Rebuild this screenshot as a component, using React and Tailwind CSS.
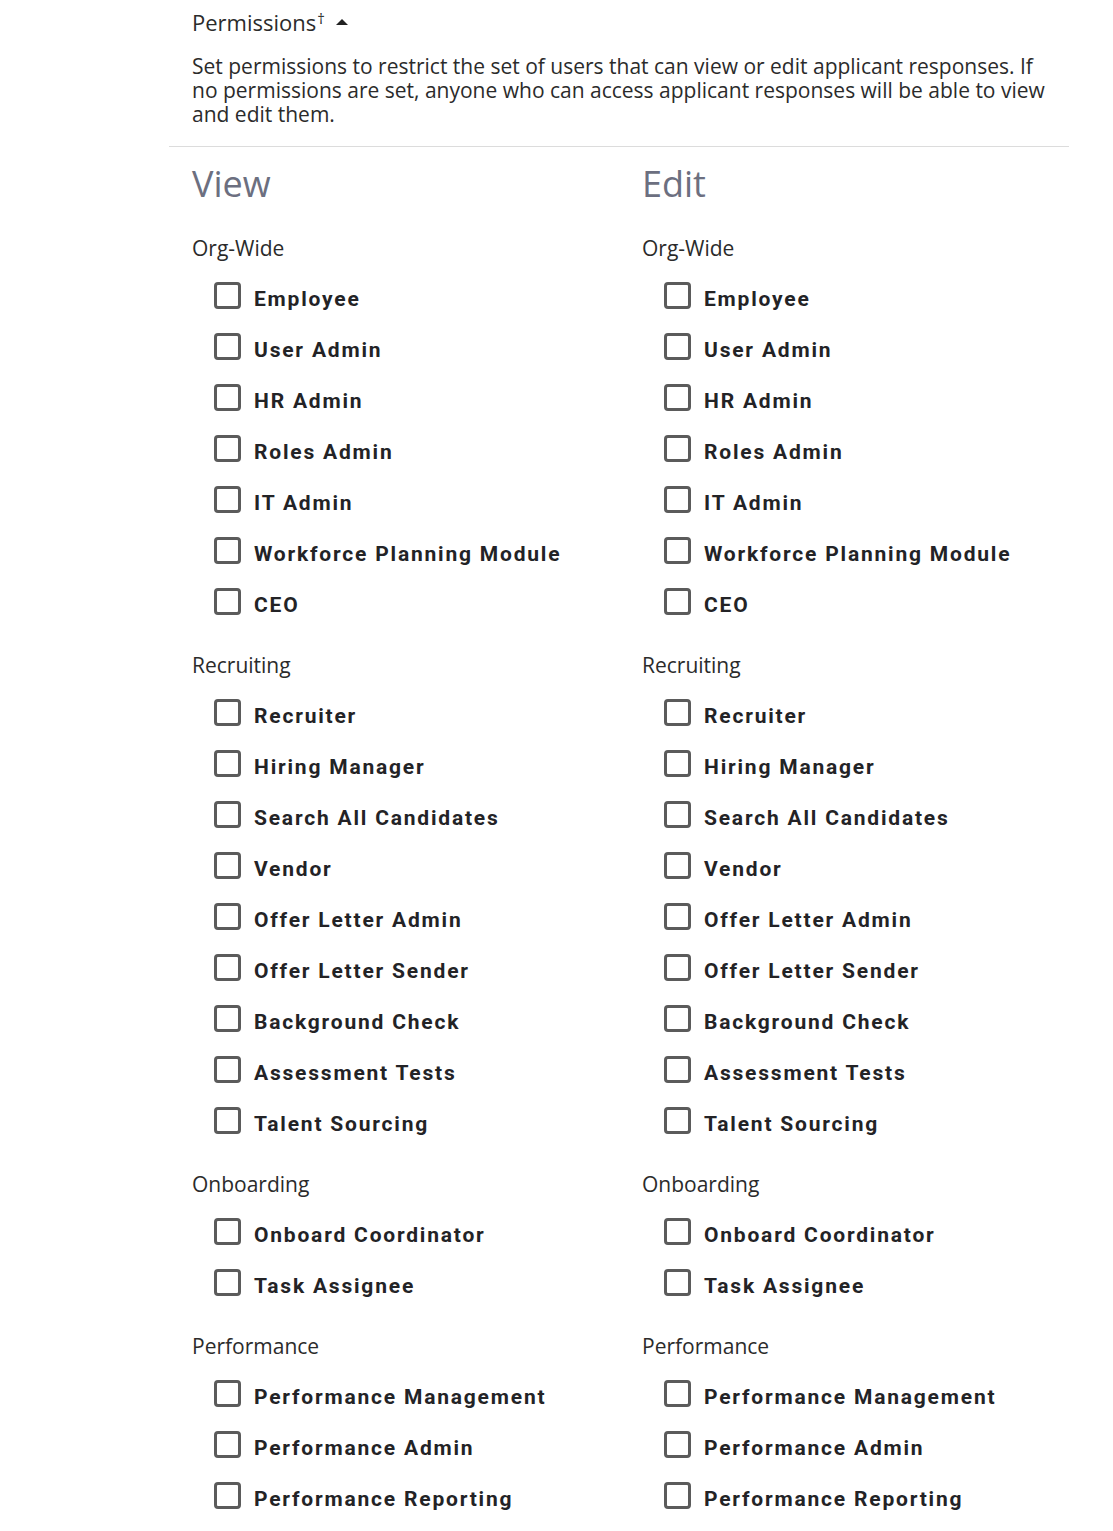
const groups = [
  {
    name: 'Org-Wide',
    roles: ['Employee', 'User Admin', 'HR Admin', 'Roles Admin', 'IT Admin', 'Workforce Planning Module', 'CEO'],
  },
  {
    name: 'Recruiting',
    roles: [
      'Recruiter',
      'Hiring Manager',
      'Search All Candidates',
      'Vendor',
      'Offer Letter Admin',
      'Offer Letter Sender',
      'Background Check',
      'Assessment Tests',
      'Talent Sourcing',
    ],
  },
  {
    name: 'Onboarding',
    roles: ['Onboard Coordinator', 'Task Assignee'],
  },
  {
    name: 'Performance',
    roles: ['Performance Management', 'Performance Admin', 'Performance Reporting'],
  },
];

function RoleCheckbox({ label }) {
  return (
    <label className="flex h-[51px] items-center pl-[22px]">
      <span className="mb-[6px] block h-[27px] w-[27px] shrink-0 rounded-[4px] border-[3px] border-[#5b5b5b] bg-white" />
      <span className="ml-[13px] whitespace-nowrap pt-[2px] font-['Roboto',sans-serif] text-[21px] font-bold tracking-[1.8px] text-[#232326]">
        {label}
      </span>
    </label>
  );
}

function PermissionColumn({ title }) {
  return (
    <div className="w-[450px] shrink-0">
      <h2 className="mt-[15px] text-[36px] leading-[44px] text-[#6c6f80]">{title}</h2>
      {groups.map((group, i) => (
        <div key={group.name} className={i === 0 ? 'mt-[30px]' : 'mt-[23px]'}>
          <div className="mb-[13px] text-[21px] leading-[24px] text-[#2b2b2b]">{group.name}</div>
          {group.roles.map((role) => (
            <RoleCheckbox key={role} label={role} />
          ))}
        </div>
      ))}
    </div>
  );
}

export default function App() {
  return (
    <div className="min-h-[1531px] bg-white font-['Open_Sans',sans-serif]">
      <div className="ml-[169px] w-[900px]">
        <div className="px-[23px] pb-[20px] pt-[10px]">
          <div className="flex items-center text-[22px] leading-[24px] text-[#2b2b2b]">
            <span>
              Permissions<sup className="ml-[1px] text-[15px]">†</sup>
            </span>
            <svg className="ml-[11px]" width="12" height="8" viewBox="0 0 12 8">
              <path d="M0 7 L6 1 L12 7 Z" fill="#222" />
            </svg>
          </div>
          <p className="mt-[20px] text-[21px] leading-[24px] text-[#2b2b2b]">
            Set permissions to restrict the set of users that can view or edit applicant responses. If no permissions
            are set, anyone who can access applicant responses will be able to view and edit them.
          </p>
        </div>
        <div className="h-px bg-[#dcdcdc]" />
        <div className="flex px-[23px] pb-[7px]">
          <PermissionColumn title="View" />
          <PermissionColumn title="Edit" />
        </div>
      </div>
    </div>
  );
}
